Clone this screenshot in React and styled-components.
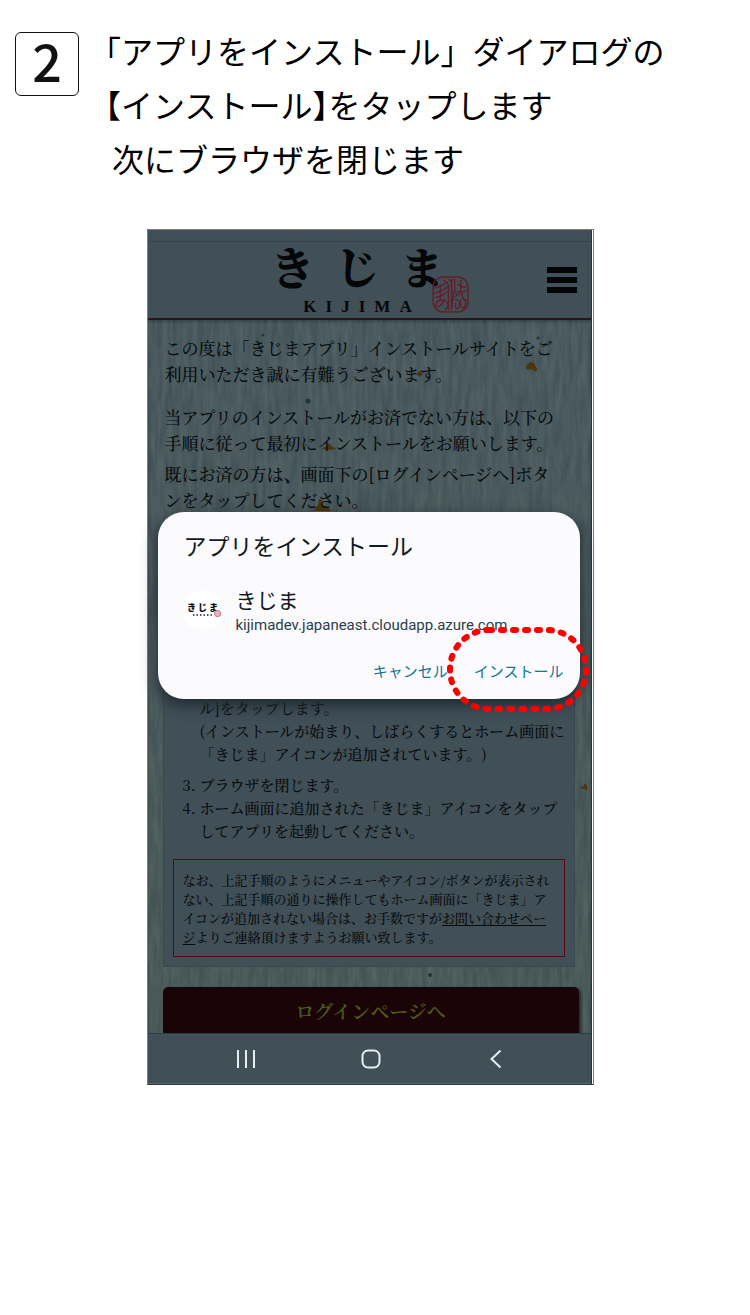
import React from 'react'
import styled, { createGlobalStyle } from 'styled-components'

const App = () => {
  return (
    <>
      <GlobalStyle />
      <Page>
        <Step>
          <StepNumber>2</StepNumber>
          <StepText>
            <Half>「</Half>アプリをインストール」ダイアログの
            <br />
            <Half>【</Half>インストール<Half>】</Half>をタップします
            <StepSub>次にブラウザを閉じます</StepSub>
          </StepText>
        </Step>

        <Phone>
          <StatusBar />
          <Header>
            <Logo>
              <Brush>
                <span>き</span>
                <span>じ</span>
                <span>ま</span>
              </Brush>
              <Roman>
                {'KIJIMA'.split('').map((letter, i) => (
                  <span key={i}>{letter}</span>
                ))}
              </Roman>
              <SealMark />
            </Logo>
            <MenuButton type='button' aria-label='メニュー'>
              <span />
              <span />
              <span />
            </MenuButton>
          </Header>

          <Content>
            <Paper />
            <Intro>
              <p>
                この度は「きじまアプリ」インストールサイトをご
                <br />
                利用いただき誠に有難うございます。
              </p>
              <p>
                当アプリのインストールがお済でない方は、以下の
                <br />
                手順に従って最初にインストールをお願いします。
              </p>
              <p>
                既にお済の方は、画面下の[ログインページへ]ボタ
                <br />
                ンをタップしてください。
              </p>
            </Intro>
            <Panel>
              <Steps>
                <li className='continued'>
                  ル]をタップします。
                  <br />
                  (インストールが始まり、しばらくするとホーム画面に
                  <br />
                  「きじま」アイコンが追加されています。)
                </li>
                <li value='3'>ブラウザを閉じます。</li>
                <li value='4'>
                  ホーム画面に追加された「きじま」アイコンをタップ
                  <br />
                  してアプリを起動してください。
                </li>
              </Steps>
              <Notice>
                なお、上記手順のようにメニューやアイコン/ボタンが表示され
                <br />
                ない、上記手順の通りに操作してもホーム画面に「きじま」ア
                <br />
                イコンが追加されない場合は、お手数ですが
                <a href='#contact'>
                  お問い合わせペー
                  <br />ジ
                </a>
                よりご連絡頂けますようお願い致します。
              </Notice>
            </Panel>
            <LoginButton type='button'>ログインページへ</LoginButton>
          </Content>

          <NavBar>
            <button type='button' aria-label='履歴'>
              <svg width='20' height='20' viewBox='0 0 20 20'>
                <path d='M2 1v18M10 1v18M18 1v18' />
              </svg>
            </button>
            <button type='button' aria-label='ホーム'>
              <svg width='20' height='20' viewBox='0 0 20 20'>
                <rect x='1.5' y='1.5' width='17' height='17' rx='5.5' />
              </svg>
            </button>
            <button type='button' aria-label='戻る'>
              <svg width='20' height='20' viewBox='0 0 20 20'>
                <path d='M14.5 1.5L5.5 10l9 8.5' />
              </svg>
            </button>
          </NavBar>

          <Dialog role='dialog' aria-labelledby='install-title'>
            <h2 id='install-title'>アプリをインストール</h2>
            <AppRow>
              <AppIcon>
                <MiniLogo>
                  <b>き</b>
                  <b>じ</b>
                  <b>ま</b>
                </MiniLogo>
                <svg width='32' height='4' viewBox='0 0 32 4'>
                  <path
                    d='M6 2h19'
                    stroke='#555b60'
                    strokeWidth='2'
                    strokeDasharray='1.5 2'
                  />
                </svg>
                <i />
              </AppIcon>
              <div>
                <AppName>きじま</AppName>
                <AppUrl>kijimadev.japaneast.cloudapp.azure.com</AppUrl>
              </div>
            </AppRow>
            <Actions>
              <button type='button'>キャンセル</button>
              <button type='button'>インストール</button>
            </Actions>
            <Ring width='144' height='88' viewBox='0 0 144 88'>
              <rect x='4' y='4' width='136' height='79' rx='39' />
            </Ring>
          </Dialog>
        </Phone>
      </Page>
    </>
  )
}

/* washi paper grain with a few gold flecks */
const Paper = () => (
  <PaperSvg aria-hidden='true'>
    <filter id='grain' x='0' y='0' width='100%' height='100%'>
      <feTurbulence
        type='fractalNoise'
        baseFrequency='0.2 0.03'
        numOctaves='3'
        seed='4'
      />
      <feColorMatrix values='0 0 0 0 0.17  0 0 0 0 0.24  0 0 0 0 0.21  0.9 0 0 0 -0.2' />
    </filter>
    <rect width='100%' height='100%' filter='url(#grain)' opacity='0.6' />
    <g fill='#4a350c'>
      <path d='M378 46l4-4 4 1 3 6-1 3-4-3-5 1z' />
      <path d='M268 54l4-3 3 3-3 3z' />
      <path d='M173 129l6-3 2-3 2 3 6 3-8 1z' />
      <path d='M165 191l5-6 1-6 3 1 1 5 5 3 4 3z' />
      <path d='M431 468l5-2v-2l3 1v6l-2-2z' />
    </g>
    <g fill='#26303d'>
      <circle cx='115' cy='15' r='1.5' />
      <circle cx='160' cy='81' r='2.5' />
      <circle cx='140' cy='162' r='2' />
      <circle cx='282' cy='655' r='2' />
      <circle cx='390' cy='18' r='1.5' />
    </g>
  </PaperSvg>
)

const SealMark = () => (
  <Seal viewBox='0 0 36 36' aria-hidden='true'>
    <rect x='1' y='1' width='34' height='34' rx='10' />
    <path d='M2 12q6-1 12-6M2 17q8-2 14-7M3 21q7-1 12-6M8 8v15q-5 3-4 7 5 1 8-8M4 25q8-3 11 1 2 5-3 7' />
    <path d='M11 4q6 2 5 9v20M15 3q5 1 4 8v22M20 3q-3 8 1 14l-2 16M22 3v10q0 4 3 5' />
    <path d='M25 8q5 4 9 2M28 4v11M24 15q6 1 10-1M21 20q6-1 7-5M30 16q-3 5 4 8M22 22q7 2 4 9-4 3-3-5M30 22q5 3 1 9-4 1-3-8' />
  </Seal>
)

export default App

const gothic = `'Noto Sans CJK JP', sans-serif`
const mincho = `'Noto Serif CJK JP', 'Noto Sans CJK JP', serif`

const GlobalStyle = createGlobalStyle`
  * {
    box-sizing: border-box;
  }
  body {
    margin: 0;
    background: #fff;
    font-family: ${gothic};
  }
  button {
    border: 0;
    padding: 0;
    background: none;
    font: inherit;
    cursor: pointer;
  }
`

const Page = styled.main`
  min-height: 100vh;
  padding-bottom: 40px;
`

const Step = styled.section`
  display: flex;
  align-items: flex-start;
  gap: 26px;
  padding: 23px 15px 0;
`

const StepNumber = styled.div`
  flex: none;
  width: 64px;
  height: 64px;
  margin-top: 9px;
  border: 1px solid #111;
  border-radius: 6px;
  color: #111;
  font-size: 52px;
  font-weight: 500;
  line-height: 54px;
  text-align: center;
`

const StepText = styled.h1`
  margin: 0;
  color: #000;
  font-size: 32px;
  font-weight: 400;
  line-height: 54px;
  white-space: nowrap;
`

const Half = styled.span`
  font-feature-settings: 'halt';
`

const StepSub = styled.span`
  display: block;
  padding-left: 7px;
`

const Phone = styled.div`
  position: relative;
  width: 100%;
  max-width: 447px;
  margin: 44px auto 0;
  border: 1px solid #777d80;
  border-bottom-color: #2c383e;
  background: #414f57;
  /* sits slightly left of the page centre */
  left: -5px;
  box-shadow: inset -1px 0 #fff, inset -2px 0 #26343b;
`

const StatusBar = styled.div`
  height: 12px;
  margin-right: 2px;
  border-bottom: 1px solid #35434a;
`

const Header = styled.header`
  display: flex;
  align-items: center;
  justify-content: flex-end;
  height: 78px;
  padding-right: 14px;
  margin-right: 2px;
  border-bottom: 2px solid #2b141f;
`

const Logo = styled.div`
  position: relative;
  display: flex;
  flex-direction: column;
  align-items: center;
  gap: 9px;
  width: 197px;
  margin-right: 78px;
  padding-right: 25px;
  color: #040607;
`

const Brush = styled.div`
  display: flex;
  gap: 21px;
  font-family: ${mincho};
  font-size: 44px;
  font-weight: 900;
  line-height: 44px;
`

const Roman = styled.div`
  display: flex;
  gap: 9px;
  font-family: 'Liberation Serif', serif;
  font-size: 17px;
  font-weight: 700;
  line-height: 20px;
`

const Seal = styled.svg`
  position: absolute;
  right: 0;
  bottom: 4px;
  width: 37px;
  height: 37px;
  fill: none;
  stroke: #651c27;
  stroke-width: 1.3;
`

const MenuButton = styled.button`
  display: grid;
  gap: 4px;
  width: 30px;

  span {
    height: 6px;
    background: #030506;
  }
`

const Content = styled.div`
  position: relative;
  margin-right: 2px;
  padding: 15px 12px 0 15px;
  background: linear-gradient(#435259, #435352);
  color: #070c0e;
  font-family: ${mincho};
  font-weight: 500;
  white-space: nowrap;
  text-spacing-trim: space-all;
  box-shadow: inset 0 2px 3px #2d3b40;

  > * {
    position: relative;
  }
`

const PaperSvg = styled.svg`
  && {
    position: absolute;
  }
  inset: 0;
  width: 100%;
  height: 100%;
`

const Intro = styled.div`
  padding-left: 2px;
  font-size: 17px;
  line-height: 26px;

  p {
    margin: 0 0 5px;
  }
  p:first-child {
    margin-bottom: 17px;
  }
`

const Panel = styled.div`
  margin: 17px 4px 0 0;
  padding: 165px 9px 9px;
  border: 1px solid #394850;
  background: #414f57;
`

const Steps = styled.ol`
  margin: 0 0 17px;
  padding-left: 27px;
  font-size: 15px;
  line-height: 23px;

  .continued {
    margin-bottom: 8px;
    list-style: none;
  }
`

const Notice = styled.p`
  margin: 0;
  padding: 10px 9px;
  border: 1px solid #560a10;
  font-size: 13px;
  line-height: 19px;

  a {
    color: inherit;
    text-underline-offset: 2px;
  }
`

const LoginButton = styled.button`
  display: block;
  width: 100%;
  height: 46px;
  margin-top: 20px;
  border-radius: 5px 5px 0 0;
  background: #1b0408;
  box-shadow: 2px 2px 3px #202b30;
  color: #4b5c19;
  font-size: 19px;
  font-weight: 600;
`

const NavBar = styled.nav`
  position: relative;
  display: flex;
  justify-content: center;
  gap: 105px;
  height: 51px;
  margin-right: 2px;
  padding-left: 4px;
  border-top: 1px solid #2f3e45;
  border-bottom: 1px solid #59666c;
  background: #414f57;

  svg {
    display: block;
    fill: none;
    stroke: #e4eef0;
    stroke-width: 2;
  }
`

const Dialog = styled.div`
  position: absolute;
  top: 282px;
  left: 10px;
  right: 13px;
  padding: 16px 16px 16px 26px;
  border-radius: 26px;
  background: #fbfbfe;
  box-shadow: 0 6px 16px #1d292f;

  h2 {
    margin: 0;
    color: #101a1f;
    font-size: 23px;
    font-weight: 400;
    line-height: 34px;
  }
`

const AppRow = styled.div`
  display: flex;
  align-items: center;
  gap: 14px;
  margin-top: 22px;
`

const AppIcon = styled.div`
  position: relative;
  display: flex;
  flex-direction: column;
  align-items: center;
  justify-content: center;
  width: 38px;
  height: 38px;
  border-radius: 14px;
  background: #fff;

  i {
    position: absolute;
    right: 1px;
    bottom: 12px;
    width: 7px;
    height: 7px;
    border: 1px solid #c9788a;
    border-radius: 3px;
    background: #e5b5c0;
  }
`

const MiniLogo = styled.div`
  display: flex;
  gap: 2px;
  color: #0c0f11;
  font-size: 9px;
  font-weight: 900;
  line-height: 10px;
`

const AppName = styled.div`
  color: #101a1f;
  font-size: 21px;
  line-height: 31px;
`

const AppUrl = styled.div`
  color: #2b4049;
  font-family: Roboto, sans-serif;
  font-size: 15px;
  line-height: 21px;
`

const Actions = styled.div`
  display: flex;
  justify-content: flex-end;
  gap: 26px;
  margin-top: 23px;

  button {
    color: #157495;
    font-size: 15px;
    line-height: 24px;
  }
`

const Ring = styled.svg`
  position: absolute;
  right: -10px;
  bottom: -15px;
  fill: none;
  stroke: #f00;
  stroke-width: 6;
  stroke-dasharray: 3 9;
  stroke-linecap: round;
  pointer-events: none;
`
